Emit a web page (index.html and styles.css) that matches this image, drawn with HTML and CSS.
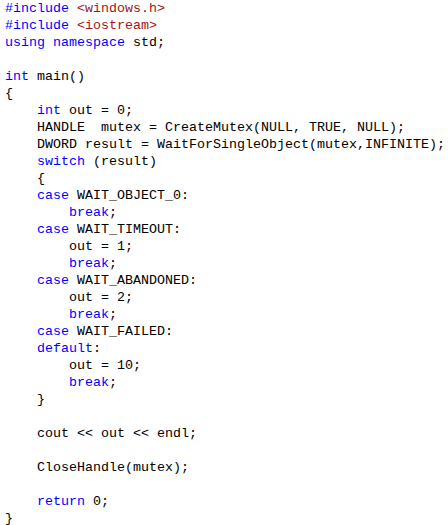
FILE: index.html
```html
<!DOCTYPE html>
<html>
<head>
<meta charset="utf-8">
<link rel="stylesheet" href="styles.css">
</head>
<body>
<pre class="code"><span class="kw">#include</span> <span class="str">&lt;windows.h&gt;</span>
<span class="kw">#include</span> <span class="str">&lt;iostream&gt;</span>
<span class="kw">using</span> <span class="kw">namespace</span> std;

<span class="kw">int</span> main()
{
    <span class="kw">int</span> out = 0;
    HANDLE  mutex = CreateMutex(NULL, TRUE, NULL);
    DWORD result = WaitForSingleObject(mutex,INFINITE);
    <span class="kw">switch</span> (result)
    {
    <span class="kw">case</span> WAIT_OBJECT_0:
        <span class="kw">break</span>;
    <span class="kw">case</span> WAIT_TIMEOUT:
        out = 1;
        <span class="kw">break</span>;
    <span class="kw">case</span> WAIT_ABANDONED:
        out = 2;
        <span class="kw">break</span>;
    <span class="kw">case</span> WAIT_FAILED:
    <span class="kw">default</span>:
        out = 10;
        <span class="kw">break</span>;
    }

    cout &lt;&lt; out &lt;&lt; endl;

    CloseHandle(mutex);

    <span class="kw">return</span> 0;
}</pre>
</body>
</html>
```

FILE: styles.css
```css
html, body {
  margin: 0;
  padding: 0;
  background: #ffffff;
}

.code {
  margin: 0;
  padding: 0 0 0 5px;
  font-family: "Liberation Mono", "Courier New", monospace;
  font-size: 13.333px;
  line-height: 17px;
  color: #000000;
  white-space: pre;
}

.kw {
  color: #0000ff;
}

.str {
  color: #a31515;
}
```
